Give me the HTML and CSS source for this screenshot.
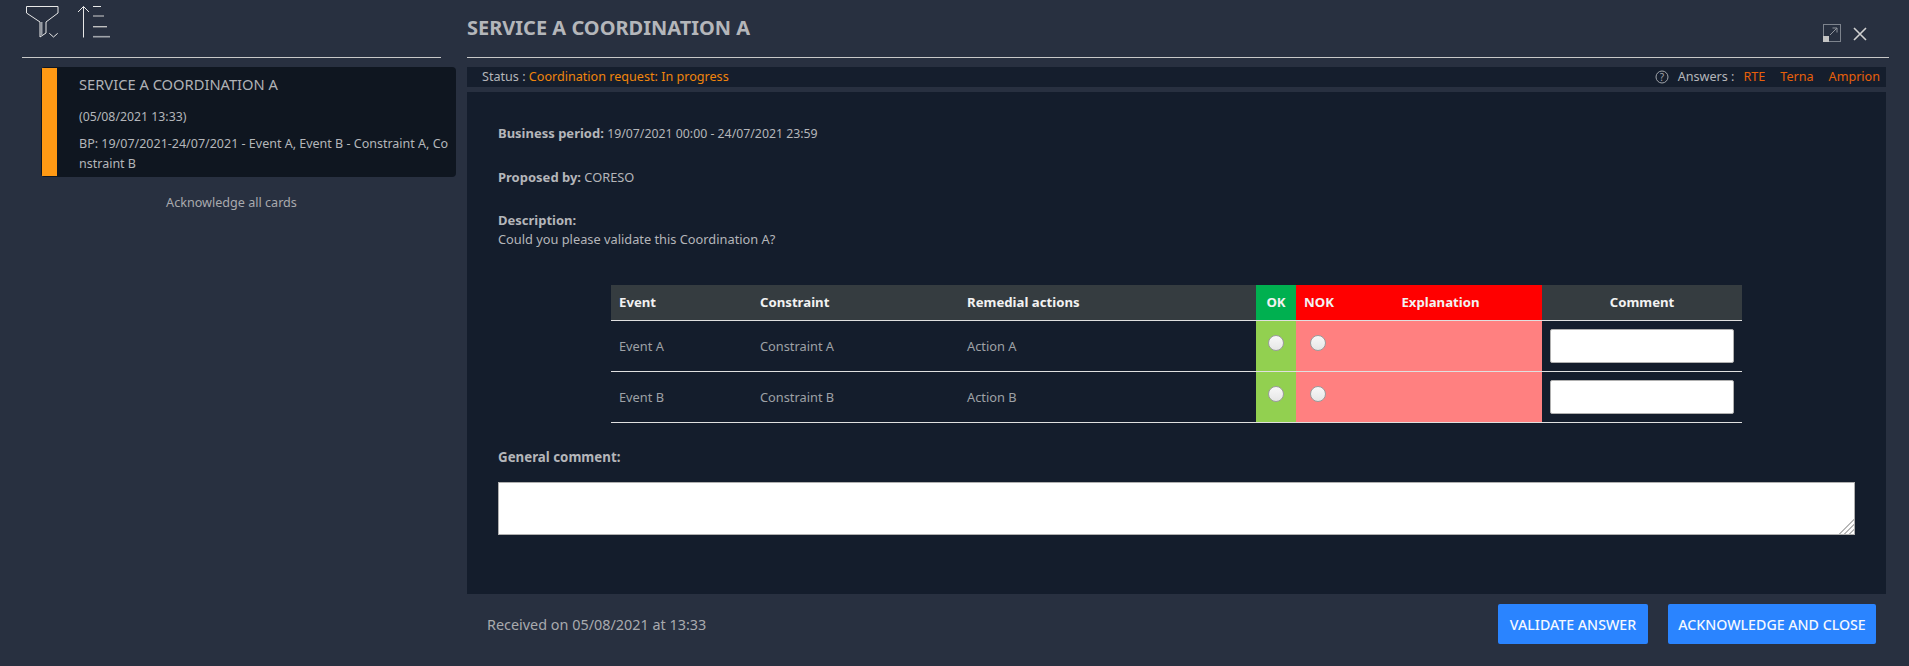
FILE: index.html
```html
<!DOCTYPE html>
<html lang="en">
<head>
  <meta charset="UTF-8">
  <title>Service A Coordination A</title>
  <link rel="stylesheet" href="styles.css">
</head>
<body>
  <div class="app">
    <aside class="sidebar">
      <div class="tools">
        <svg class="tool-filter" width="36" height="40" viewBox="0 0 36 40" fill="none">
          <path d="M1.5 1.5H33V8L21 17V28L15 32V17L1.5 8Z" stroke="#e8e8e8" stroke-width="1"/>
          <path d="M16.5 17V30" stroke="#9a9ea6" stroke-width="2"/>
          <path d="M24.3 28.3L28.5 32L32.7 28.3" stroke="#e8e8e8" stroke-width="1"/>
        </svg>
        <svg class="tool-sort" width="34" height="40" viewBox="0 0 34 40" fill="none">
          <path d="M6.5 32.5V1.5M1 7L6.5 1.5L12 7" stroke="#e8e8e8" stroke-width="1"/>
          <path d="M16 1.5H24" stroke="#e8e8e8"/>
          <path d="M16 11H27" stroke="#d0d0d0"/>
          <path d="M16 21.7H30" stroke="#c0c0c0" stroke-width="1.4"/>
          <path d="M16 31.7H33" stroke="#a0a4aa" stroke-width="1.6"/>
        </svg>
      </div>
      <div class="card">
        <div class="card-bar"></div>
        <div class="card-text">
          <div class="card-title">SERVICE A COORDINATION A</div>
          <div class="card-date">(05/08/2021 13:33)</div>
          <div class="card-summary">BP: 19/07/2021-24/07/2021 - Event A, Event B - Constraint A, Constraint B</div>
        </div>
      </div>
      <div class="ack-all">Acknowledge all cards</div>
    </aside>

    <main class="detail">
      <header class="detail-head">
        <h1>SERVICE A COORDINATION A</h1>
        <div class="head-icons">
          <svg width="18" height="18" viewBox="0 0 18 18" fill="none">
            <rect x="0.5" y="0.5" width="17" height="17" stroke="#7d838d"/>
            <rect x="0" y="12" width="6" height="6" fill="#c4c4c4"/>
            <path d="M7 11L14 4M9.5 4H14V8.5" stroke="#8f949c"/>
          </svg>
          <svg width="14" height="14" viewBox="0 0 14 14" fill="none">
            <path d="M1 1L13 13M13 1L1 13" stroke="#d0d0d0" stroke-width="1.6"/>
          </svg>
        </div>
      </header>

      <div class="status">
        <div>Status : <span class="status-value">Coordination request: In progress</span></div>
        <div class="answers">
          <svg width="14" height="14" viewBox="0 0 14 14" fill="none">
            <circle cx="7" cy="7" r="6" stroke="#a0a4aa"/>
            <text x="7" y="10.5" class="help-mark">?</text>
          </svg>
          <span class="answers-label">Answers :</span>
          <span class="entity">RTE</span>
          <span class="entity">Terna</span>
          <span class="entity">Amprion</span>
        </div>
      </div>

      <section class="content">
        <p class="field"><b>Business period:</b> <span class="period">19/07/2021 00:00 - 24/07/2021 23:59</span></p>
        <p class="field"><b>Proposed by:</b> CORESO</p>
        <p class="field desc"><b>Description:</b><br>Could you please validate this Coordination A?</p>

        <table class="grid">
          <colgroup>
            <col class="col-event"><col class="col-constraint"><col class="col-action">
            <col class="col-ok"><col class="col-nok"><col class="col-expl"><col class="col-comment">
          </colgroup>
          <thead>
            <tr>
              <th>Event</th>
              <th>Constraint</th>
              <th>Remedial actions</th>
              <th class="ok-head">OK</th>
              <th class="nok-head">NOK</th>
              <th class="nok-head expl">Explanation</th>
              <th class="center">Comment</th>
            </tr>
          </thead>
          <tbody>
            <tr>
              <td>Event A</td>
              <td>Constraint A</td>
              <td>Action A</td>
              <td class="ok-cell"><input type="radio" name="a"></td>
              <td class="nok-cell"><input type="radio" name="a"></td>
              <td class="nok-cell"></td>
              <td class="comment-cell"><input type="text"></td>
            </tr>
            <tr>
              <td>Event B</td>
              <td>Constraint B</td>
              <td>Action B</td>
              <td class="ok-cell"><input type="radio" name="b"></td>
              <td class="nok-cell"><input type="radio" name="b"></td>
              <td class="nok-cell"></td>
              <td class="comment-cell"><input type="text"></td>
            </tr>
          </tbody>
        </table>

        <p class="field general"><b>General comment:</b></p>
        <textarea class="general-input"></textarea>
      </section>

      <footer class="detail-foot">
        <div class="received">Received on 05/08/2021 at 13:33</div>
        <button class="btn validate">VALIDATE ANSWER</button>
        <button class="btn">ACKNOWLEDGE AND CLOSE</button>
      </footer>
    </main>
  </div>
</body>
</html>
```

FILE: styles.css
```css
* {
  box-sizing: border-box;
}

body {
  margin: 0;
  background: #283040;
  color: #b4b6ba;
  font-family: 'Noto Sans', sans-serif;
  font-size: 12.6px;
  overflow: hidden;
}

.app {
  display: flex;
  height: 666px;
}

/* left column */
.sidebar {
  width: 467px;
  flex: none;
  padding: 0 11px 0 22px;
}

.tools {
  height: 58px;
  width: 419px;
  padding: 5px 0 0 3px;
  display: flex;
  align-items: flex-start;
  gap: 16px;
  border-bottom: 1px solid #c8c8c8;
}

.card {
  display: flex;
  margin: 9px 0 0 19px;
  height: 110px;
  background: #0f1620;
  border-radius: 4px;
  overflow: hidden;
}

.card-bar {
  width: 15px;
  margin: 1px 0 1px 1px;
  flex: none;
  background: #ff9914;
}

.card-text {
  padding: 0 5px 0 22px;
  min-width: 0;
}

.card-title {
  font-size: 14.7px;
  line-height: 20px;
  margin-top: 7px;
  color: #b0b2b6;
}

.card-date {
  font-size: 12.3px;
  line-height: 20px;
  margin-top: 13px;
}

.card-summary {
  font-size: 12.5px;
  line-height: 20px;
  margin-top: 7px;
  word-break: break-all;
}

.ack-all {
  width: 419px;
  margin-top: 17px;
  font-size: 12.6px;
  line-height: 18px;
  text-align: center;
  color: #a8aaae;
}

/* right column */
.detail {
  width: 1422px;
  flex: none;
}

.detail-head {
  height: 58px;
  display: flex;
  justify-content: space-between;
  border-bottom: 1px solid #c8c8c8;
}

h1 {
  margin: 14px 0 0;
  font-size: 20px;
  line-height: 28px;
  font-weight: 700;
  color: #b4b6ba;
}

.head-icons {
  display: flex;
  align-items: flex-start;
  gap: 12px;
  padding: 24px 22px 0 0;
}

.head-icons svg + svg {
  margin-top: 3px;
}

.status {
  width: 1419px;
  height: 20px;
  margin-top: 9px;
  padding: 0 6px 0 15px;
  display: flex;
  justify-content: space-between;
  align-items: center;
  background: #151e2d;
  line-height: 20px;
}

.status-value {
  color: #f0850c;
}

.answers {
  display: flex;
  align-items: center;
}

.help-mark {
  font-size: 10px;
  fill: #a0a4aa;
  text-anchor: middle;
}

.answers-label {
  margin: 0 0 0 9px;
}

.entity {
  margin-left: 9px;
  color: #e8600a;
}

.entity + .entity {
  margin-left: 15px;
}

.content {
  width: 1419px;
  height: 502px;
  margin-top: 5px;
  padding: 32px 31px 0;
  background: #141d2c;
  font-size: 12.8px;
}

.field {
  margin: 0 0 24.5px;
  line-height: 18px;
}

.field b {
  font-size: 13px;
}

.period {
  font-size: 12.3px;
}

.desc {
  margin-top: 25.5px;
  line-height: 19px;
}

/* answer table */
.grid {
  width: 1131px;
  margin: 36px 0 0 113px;
  border-collapse: collapse;
  table-layout: fixed;
}

.col-event { width: 141px; }
.col-constraint { width: 207px; }
.col-action { width: 297px; }
.col-ok { width: 40px; }
.col-nok { width: 43px; }
.col-expl { width: 203px; }
.col-comment { width: 200px; }

.grid th {
  height: 35px;
  padding: 0 8px;
  background: #353c40;
  color: #f2f2f2;
  font-size: 13.2px;
  text-align: left;
  font-weight: 700;
  border-bottom: 1px solid #e0e0e0;
}

.grid td {
  height: 51px;
  padding: 1px 8px 0;
  color: #9ea1a6;
  border-bottom: 1px solid #e0e0e0;
}

.grid th.center {
  text-align: center;
}

.grid th.ok-head {
  background: #00b050;
  text-align: center;
  padding: 0;
}

.grid th.nok-head {
  background: #ff0000;
  padding-right: 0;
}

.grid th.expl {
  padding: 0;
  text-align: center;
}

.grid td.ok-cell {
  background: #92d050;
  padding: 0;
  text-align: center;
}

.grid td.nok-cell {
  background: #ff8080;
  padding: 0;
  text-align: center;
}

input[type="radio"] {
  appearance: none;
  display: block;
  width: 16px;
  height: 16px;
  margin: -6px auto 0;
  border: 1px solid #9a9a9a;
  border-radius: 50%;
  background: linear-gradient(#f8f8f8, #e6e6e6);
}

.grid td.comment-cell {
  padding: 0 8px;
}

input[type="text"] {
  display: block;
  width: 184px;
  height: 34px;
  background: #fff;
  border: 1px solid #b0b0b0;
  border-radius: 2px;
}

.field.general {
  margin: 25px 0 16px;
}

.general b {
  font-size: 13.3px;
}

.general-input {
  display: block;
  width: 1357px;
  height: 53px;
  margin: 0;
  background: #fff;
  border: 1px solid #b0b0b0;
  border-radius: 0;
}

.general-input::-webkit-resizer {
  background:
    linear-gradient(135deg, #fff 50%, transparent 50%),
    repeating-linear-gradient(135deg, #b8b8b8 0 1.5px, #fff 1.5px 3.5px);
}

.detail-foot {
  display: flex;
  align-items: center;
  width: 1409px;
  margin-top: 10px;
}

.received {
  flex: 1;
  padding-left: 20px;
  font-size: 14.4px;
  color: #a8aaae;
}

.btn {
  height: 40px;
  padding: 0 6px;
  border: none;
  border-radius: 2px;
  background: #2a84ff;
  color: #f4f8ff;
  font-family: inherit;
  font-size: 14.2px;
  font-weight: 500;
}

.validate {
  width: 150px;
  margin-right: 20px;
}

.btn:not(.validate) {
  width: 208px;
}
```
